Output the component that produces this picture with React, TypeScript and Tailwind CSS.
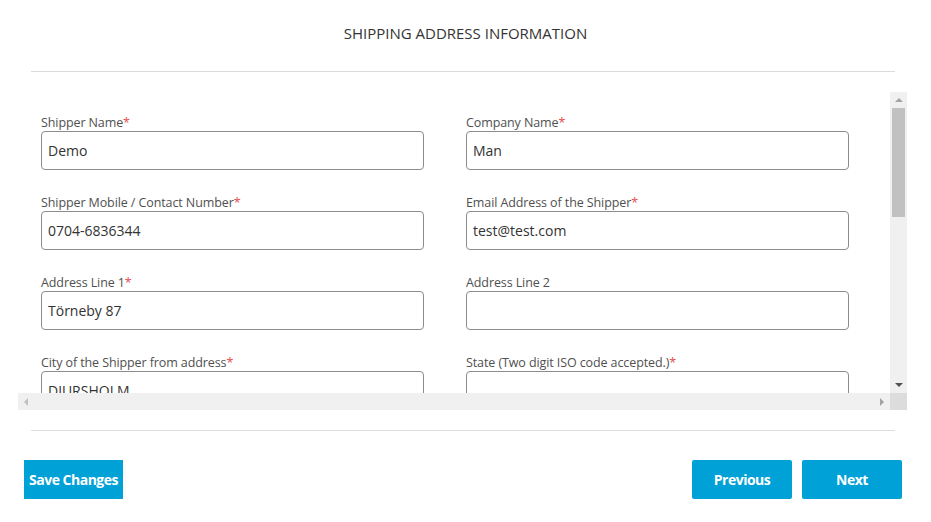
import React from "react"

type Field = {
  label: string
  value: string
  required: boolean
}

const FIELDS: Field[] = [
  { label: "Shipper Name", value: "Demo", required: true },
  { label: "Company Name", value: "Man", required: true },
  { label: "Shipper Mobile / Contact Number", value: "0704-6836344", required: true },
  { label: "Email Address of the Shipper", value: "test@test.com", required: true },
  { label: "Address Line 1", value: "Törneby 87", required: true },
  { label: "Address Line 2", value: "", required: false },
  { label: "City of the Shipper from address", value: "DJURSHOLM", required: true },
  { label: "State (Two digit ISO code accepted.)", value: "", required: true },
]

function FormField({ field }: { field: Field }) {
  return (
    <div className="flex flex-col">
      <label className="h-[17px] text-[12.5px] leading-[17px] tracking-[-0.1px] text-[#505050] whitespace-nowrap">
        {field.label}
        {field.required && <span className="text-[#e64c4c]">*</span>}
      </label>
      <input
        readOnly
        value={field.value}
        className="h-[39px] w-[383px] rounded-[4px] border border-[#8c8c8c] bg-white px-[6px] text-[14px] text-[#333] outline-none"
      />
    </div>
  )
}

function Arrow({ dir, color }: { dir: "up" | "down" | "left" | "right"; color: string }) {
  const points = {
    up: "0,5 4,1 8,5",
    down: "0,1 4,5 8,1",
    left: "5,0 1,4 5,8",
    right: "1,0 5,4 1,8",
  }[dir]
  const vertical = dir === "up" || dir === "down"
  return (
    <svg width={vertical ? 8 : 6} height={vertical ? 6 : 8} viewBox={vertical ? "0 0 8 6" : "0 0 6 8"}>
      <polygon points={points} fill={color} />
    </svg>
  )
}

export default function App() {
  return (
    <div
      className="flex h-[522px] w-[931px] flex-col bg-white"
      style={{ fontFamily: '"Open Sans", "Liberation Sans", sans-serif' }}
    >
      {/* Heading */}
      <h1 className="pt-[23px] text-center text-[15px] leading-[20px] text-[#333]">
        SHIPPING ADDRESS INFORMATION
      </h1>
      <div className="ml-[31px] mr-[36px] mt-[28px] h-px bg-[#dcdcdc]" />

      {/* Scrollable form */}
      <div className="ml-[18px] mt-[20px] flex h-[318px] w-[889px] flex-col">
        <div className="flex h-[301px]">
          <div className="h-[301px] w-[872px] overflow-hidden pl-[23px] pt-[22px]">
            <div className="grid grid-cols-[383px_383px] gap-x-[42px] gap-y-[24px]">
              {FIELDS.map((f) => (
                <FormField key={f.label} field={f} />
              ))}
            </div>
          </div>
          <div className="flex w-[17px] flex-col bg-[#f0f0f0]">
            <div className="flex h-[16px] items-center justify-center">
              <Arrow dir="up" color="#a3a3a3" />
            </div>
            <div className="mx-[2px] h-[109px] bg-[#c1c1c1]" />
            <div className="flex-1" />
            <div className="flex h-[17px] items-center justify-center">
              <Arrow dir="down" color="#505050" />
            </div>
          </div>
        </div>
        <div className="flex h-[17px]">
          <div className="flex w-[872px] items-center justify-between bg-[#f0f0f0] px-[5px]">
            <Arrow dir="left" color="#c0c0c0" />
            <Arrow dir="right" color="#a3a3a3" />
          </div>
          <div className="w-[17px] bg-[#dcdcdc]" />
        </div>
      </div>

      <div className="ml-[31px] mr-[36px] mt-[20px] h-px bg-[#dcdcdc]" />

      {/* Actions */}
      <div className="mt-[29px] flex items-center justify-between pl-[24px] pr-[29px]">
        <button className="h-[39px] w-[99px] bg-[#00a1d6] text-[14px] leading-[39px] font-bold tracking-[-0.5px] text-white">
          Save Changes
        </button>
        <div className="flex gap-[10px]">
          <button className="h-[39px] w-[100px] rounded-[2px] bg-[#00a1d6] text-[14px] leading-[39px] font-bold tracking-[-0.5px] text-white">
            Previous
          </button>
          <button className="h-[39px] w-[100px] rounded-[2px] bg-[#00a1d6] text-[14px] leading-[39px] font-bold tracking-[-0.5px] text-white">
            Next
          </button>
        </div>
      </div>
    </div>
  )
}
